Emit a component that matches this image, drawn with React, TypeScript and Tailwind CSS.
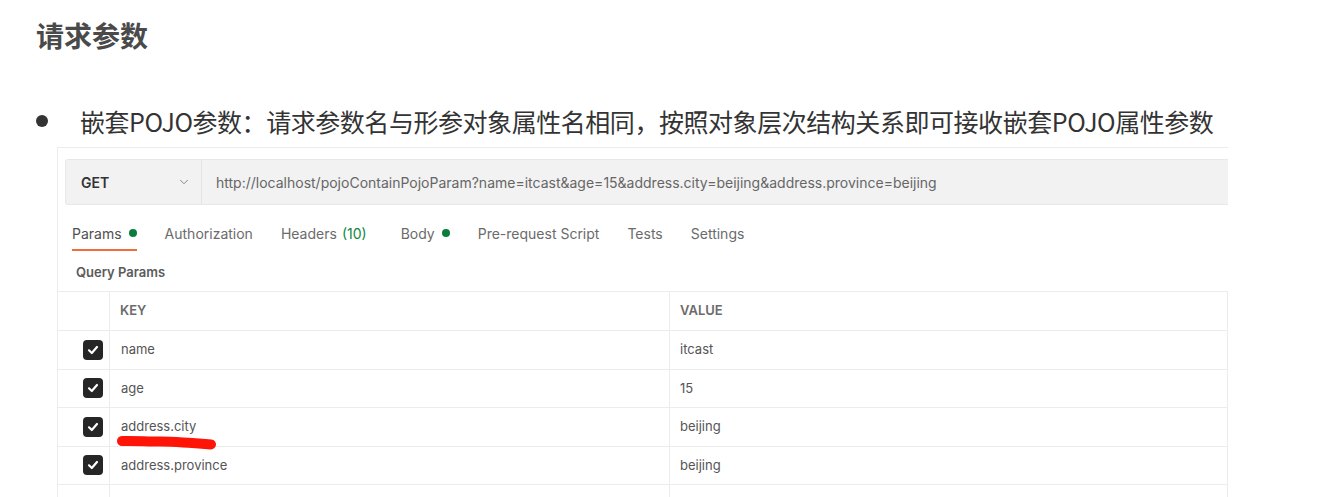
import { ChevronDown } from 'lucide-react';

const rows = [
  { key: 'name', value: 'itcast' },
  { key: 'age', value: '15' },
  { key: 'address.city', value: 'beijing', marked: true },
  { key: 'address.province', value: 'beijing' },
];

const tabs = [
  { label: 'Params', dot: true, active: true },
  { label: 'Authorization' },
  { label: 'Headers', count: '(10)' },
  { label: 'Body', dot: true, extra: true },
  { label: 'Pre-request Script' },
  { label: 'Tests' },
  { label: 'Settings' },
];

function Checkbox() {
  return (
    <div className="w-5 h-5 rounded-[4px] bg-[#262626] flex items-center justify-center">
      <svg width="14" height="14" viewBox="0 0 14 14" fill="none">
        <path d="M3 7.3L5.8 10L11 4" stroke="white" strokeWidth="2.2" strokeLinecap="round" strokeLinejoin="round" />
      </svg>
    </div>
  );
}

export default function App() {
  return (
    <div className="w-[1337px] h-[497px] overflow-hidden bg-white text-[#333] font-['Noto_Sans_CJK_SC','Noto_Sans',sans-serif]">
      {/* Section title */}
      <h2 className="pl-[36px] pt-[15px] text-[28px] leading-[40px] font-bold text-[#4a4a4a]">请求参数</h2>

      {/* Bullet line */}
      <div className="flex items-center pl-[36px] mt-[46px] h-[40px]">
        <span className="w-[12px] h-[12px] rounded-full bg-[#333] shrink-0" />
        <p className="ml-[32px] text-[25px] leading-[40px] tracking-[-0.45px] text-[#333] whitespace-nowrap">
          嵌套POJO参数：请求参数名与形参对象属性名相同，按照对象层次结构关系即可接收嵌套POJO属性参数
        </p>
      </div>

      {/* Postman screenshot */}
      <div className="ml-[57px] mt-[6px] w-[1171px] border-l border-t border-[#ececec] font-['Inter',sans-serif]">
        {/* URL bar */}
        <div className="ml-[7px] mt-[11px] h-[46px] flex bg-[#f2f2f2] border-y border-l border-[#e8e8e8] rounded-l-[3px]">
          <div className="w-[136px] flex items-center justify-between pl-[15px] pr-[10px] border-r border-[#e4e4e4]">
            <span className="text-[14px] font-semibold text-[#333]">GET</span>
            <ChevronDown size={14} strokeWidth={1.5} className="text-[#777]" />
          </div>
          <div className="flex items-center pl-[14px] text-[14px] text-[#666] whitespace-nowrap">
            http://localhost/pojoContainPojoParam?name=itcast&amp;age=15&amp;address.city=beijing&amp;address.province=beijing
          </div>
        </div>

        {/* Tabs */}
        <div className="flex items-end pl-[14px] h-[46px] gap-[28px] text-[14px] text-[#6b6b6b]">
          {tabs.map((t) => (
            <div key={t.label} className={`relative flex items-center h-[30px] pb-[6px] ${t.active ? 'text-[#505050]' : ''} ${t.extra ? 'ml-[6px]' : ''}`}>
              <span>{t.label}</span>
              {t.count && <span className="ml-[5px] text-[#0b8a42]">{t.count}</span>}
              {t.dot && <span className="ml-[7px] w-[8px] h-[8px] rounded-full bg-[#0a7d3c]" />}
              {t.active && <span className="absolute left-0 right-0 bottom-0 h-[2px] bg-[#f26b3a]" />}
            </div>
          ))}
        </div>

        {/* Query Params label */}
        <div className="pl-[18px] pt-[4px] h-[40px] flex items-center text-[13px] font-semibold text-[#5a5a5a]">Query Params</div>

        {/* Table */}
        <div className="border-t border-r border-[#ececec] text-[13px] text-[#555]">
          <div className="flex h-[39px] border-b border-[#ececec] text-[13px] font-semibold text-[#6b6b6b]">
            <div className="w-[52px] border-r border-[#ececec]" />
            <div className="w-[560px] flex items-center pl-[10px] border-r border-[#ececec]">KEY</div>
            <div className="flex-1 flex items-center pl-[10px]">VALUE</div>
          </div>
          {rows.map((r) => (
            <div key={r.key} className="flex h-[38.5px] border-b border-[#ececec]">
              <div className="w-[52px] flex items-center justify-end pr-[6px] border-r border-[#ececec]">
                <Checkbox />
              </div>
              <div className="relative w-[560px] flex items-center pl-[11px] border-r border-[#ececec]">
                {r.key}
                {r.marked && (
                  <svg className="absolute left-[6px] top-[25px] z-10" width="100" height="20" viewBox="0 0 100 20" fill="none">
                    <path d="M6 8C18 7.5 30 8.5 44 8.5C58 8.5 66 9.5 76 10C84 10.5 90 11 95 11.5" stroke="#ff1408" strokeWidth="10" strokeLinecap="round" />
                  </svg>
                )}
              </div>
              <div className="flex-1 flex items-center pl-[10px]">{r.value}</div>
            </div>
          ))}
          <div className="flex h-[38.5px] text-[#b5b5b5]">
            <div className="w-[52px] border-r border-[#ececec]" />
            <div className="w-[560px] flex items-start pt-[8px] pl-[11px] border-r border-[#ececec]">Key</div>
            <div className="flex-1 flex items-start pt-[8px] pl-[10px]">Value</div>
          </div>
        </div>
      </div>
    </div>
  );
}
